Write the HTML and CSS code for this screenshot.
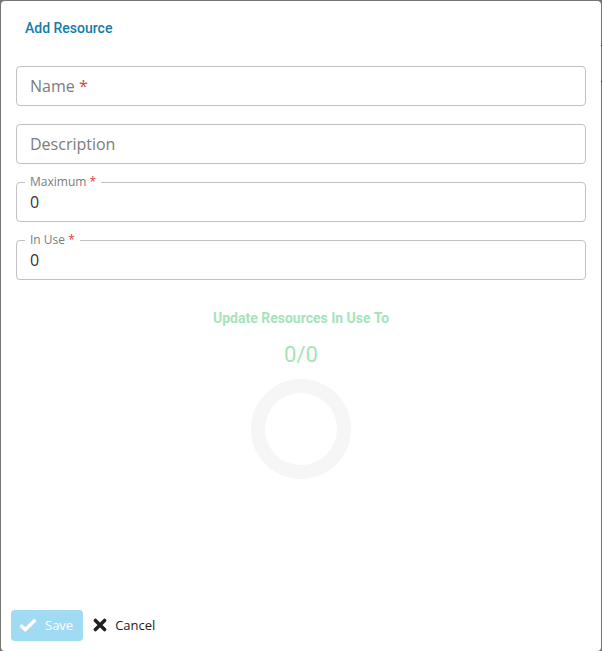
FILE: index.html
```html
<!DOCTYPE html>
<html lang="en">
<head>
<meta charset="utf-8">
<meta name="viewport" content="width=device-width, initial-scale=1">
<title>Add Resource</title>
<link rel="stylesheet" href="styles.css">
</head>
<body>
<form class="dialog">
  <h1 class="title">Add Resource</h1>
  <div class="fields">
    <div class="field">
      <input id="name" type="text" placeholder=" " required>
      <label for="name">Name <span class="required">*</span></label>
    </div>
    <div class="field">
      <input id="description" type="text" placeholder=" ">
      <label for="description">Description</label>
    </div>
    <div class="field">
      <input id="maximum" type="text" inputmode="numeric" placeholder=" " value="0" required>
      <label for="maximum">Maximum <span class="required">*</span></label>
    </div>
    <div class="field">
      <input id="in-use" type="text" inputmode="numeric" placeholder=" " value="0" required>
      <label for="in-use">In Use <span class="required">*</span></label>
    </div>
  </div>
  <section class="usage">
    <h2 class="usage-title">Update Resources In Use To</h2>
    <p class="usage-count">0/0</p>
    <svg class="ring" viewBox="0 0 100 100" aria-hidden="true"><circle cx="50" cy="50" r="43"/></svg>
  </section>
  <footer class="actions">
    <button class="button save" type="submit">
      <svg class="check" viewBox="0 0 18 14" aria-hidden="true"><path d="M1.5 7.2 6.3 11.6 16.5 1.8"/></svg>
      Save
    </button>
    <button class="button cancel" type="button">
      <svg class="cross" viewBox="0 0 14 14" aria-hidden="true"><path d="M2.4 2.4 11.6 11.6M11.6 2.4 2.4 11.6"/></svg>
      Cancel
    </button>
  </footer>
</form>
</body>
</html>
```
FILE: styles.css
```css
* {
  box-sizing: border-box;
}

body {
  margin: 0;
  padding: 1px 1px 0;
  min-height: 100vh;
  display: flex;
  /* two row lines of the dimmed page show at the right edge */
  background:
    linear-gradient(#111, #111) right 45px / 1px 1px no-repeat,
    linear-gradient(#111, #111) right 81px / 1px 1px no-repeat,
    #757575;
  font-family: "Open Sans", sans-serif;
}

.dialog {
  flex: 1;
  display: flex;
  flex-direction: column;
  padding: 17px 10px 10px;
  border-radius: 4px;
  background: #fff;
}

.title {
  margin: 0 14px;
  color: #127cab;
  font: 500 14px/20px Roboto, sans-serif;
}

.fields {
  display: grid;
  gap: 18px;
  margin: 28px 5px 0;
}

.field {
  position: relative;
}

.field input {
  display: block;
  width: 100%;
  height: 40px;
  padding: 0 13px;
  border: 1px solid #c1c1c1;
  border-radius: 4px;
  background: #fff;
  color: #333;
  font: 16px/24px "Open Sans", sans-serif;
  outline: none;
}

.field input:focus {
  border-color: #127cab;
}

.field label {
  position: absolute;
  top: 8px;
  left: 9px;
  padding: 0 5px;
  background: #fff;
  color: #7c7c7c;
  font-size: 16px;
  line-height: 24px;
  pointer-events: none;
}

.field input:focus + label,
.field input:not(:placeholder-shown) + label {
  top: -8px;
  font-size: 12px;
  line-height: 16px;
}

.required {
  color: #e03c3c;
}

.usage {
  display: flex;
  flex-direction: column;
  align-items: center;
  margin-top: 28px;
  color: #a6e3bb;
  font-family: Roboto, sans-serif;
}

.usage-title {
  margin: 0;
  font-size: 14px;
  font-weight: 700;
  line-height: 20px;
}

.usage-count {
  margin: 13px 0 10px;
  font-size: 22px;
  font-weight: 400;
  line-height: 28px;
}

.ring {
  width: 100px;
  height: 100px;
}

.ring circle {
  fill: none;
  stroke: #f6f6f6;
  stroke-width: 14;
}

.actions {
  display: flex;
  margin-top: auto;
}

.button {
  display: flex;
  align-items: center;
  gap: 8px;
  height: 31px;
  padding: 0 10px 1px 8px;
  border: 0;
  border-radius: 4px;
  background: none;
  color: #212121;
  font: 13px/20px "Open Sans", sans-serif;
}

.save {
  background: #a0daf3;
  color: #fff;
}

.cancel {
  padding-left: 10px;
}

.check {
  width: 18px;
  height: 14px;
}

.cross {
  width: 14px;
  height: 14px;
}

.check path,
.cross path {
  fill: none;
  stroke: currentColor;
  stroke-width: 3.5;
}

.cross path {
  stroke-linecap: round;
}
```
